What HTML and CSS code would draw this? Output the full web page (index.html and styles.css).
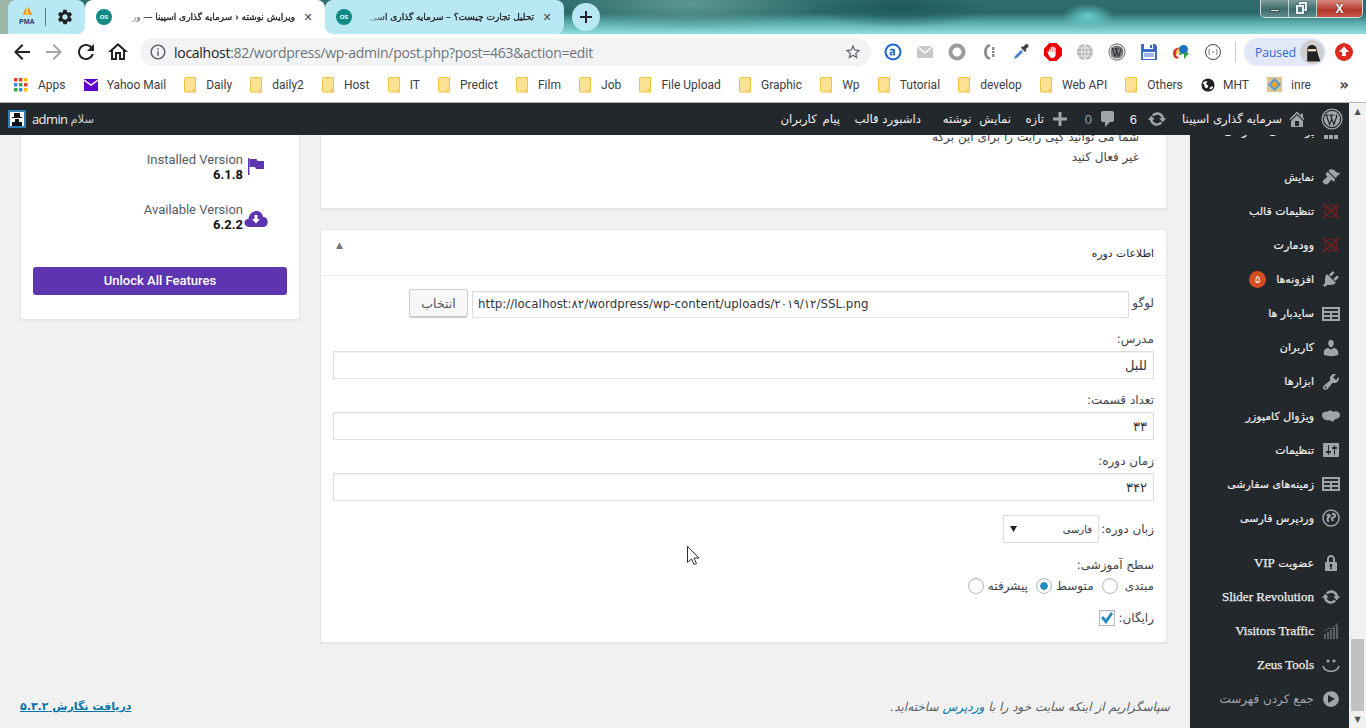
FILE: index.html
```html
<!DOCTYPE html>
<html lang="fa">
<head>
<meta charset="utf-8">
<title>ویرایش نوشته</title>
<link rel="stylesheet" href="styles.css">
</head>
<body>
<svg class="defs" width="0" height="0" aria-hidden="true">
  <symbol id="folder" viewBox="0 0 12 16"><path d="M.5 1.5C.5 1 1 .5 1.5.5h7l3 0v11l0 3.500h-10c-.5 0-1-.5-1-1z" fill="#fde293" stroke="#eec342"/><path d="M9 12.500h2.500v2.500H9z" fill="#fde293" stroke="#eec342" stroke-width=".8"/></symbol>
  <symbol id="xmark" viewBox="0 0 20 20"><g fill="none" stroke="#6a2227" stroke-width="2.200"><path d="M2 3l16 14M18 3L2 17"/><circle cx="10" cy="10" r="6" stroke-width="1.200"/></g></symbol>
  <symbol id="table" viewBox="0 0 20 20"><path fill="#a0a5aa" d="M19 17V3H1v14h18zM17 7H3V5h14v2zm-8 4H3V9h6v2zm8 0h-6V9h6v2zm-8 4H3v-2h6v2zm8 0h-6v-2h6v2z"/></symbol>
  <symbol id="update" viewBox="0 0 20 20"><path fill="currentColor" d="M10.200 3.280c3.530 0 6.430 2.610 6.920 6h2.080l-3.500 4-3.500-4h2.320c-.45-1.970-2.210-3.450-4.320-3.450-1.450 0-2.730.71-3.540 1.780L4.950 5.660C6.230 4.200 8.110 3.280 10.200 3.280zm-.4 13.440c-3.520 0-6.430-2.610-6.920-6H.8l3.500-4c1.170 1.330 2.330 2.670 3.500 4H5.480c.45 1.970 2.210 3.450 4.320 3.450 1.450 0 2.730-.71 3.540-1.780l1.710 1.950c-1.280 1.460-3.150 2.380-5.250 2.380z"/></symbol>
  <symbol id="wplogo" viewBox="0 0 20 20"><circle cx="10" cy="10" r="9" fill="none" stroke="currentColor" stroke-width="1.200"/><circle cx="10" cy="10" r="7.300" fill="currentColor"/><path d="M4.800 6.500l3 8.500 2-5.500-1-3M8.500 6.500l3.200 8.500 2.500-7c.4-1-.2-1.500-.6-1.800M4 6.500h3M8 6.500h3.500" fill="none" stroke="#23282d" stroke-width="1.100"/></symbol>
</svg>

<div class="chrome">
  <div class="tabstrip">
    <div class="pinned">
      <div class="pin pin-first">
        <svg class="pma" viewBox="0 0 24 22"><path d="M6 12L11 1l1 11zM12 12l2-11 5 11z" fill="#f29111"/><path d="M9 12l3-9 3 9z" fill="#f8c66b"/></svg>
        <span class="pma-text">PMA</span>
      </div>
      <div class="pin">
        <svg class="ico18" viewBox="0 0 24 24"><path fill="#202124" d="M19.140 12.940c.04-.3.06-.61.06-.94 0-.32-.02-.64-.07-.94l2.030-1.580c.18-.14.23-.41.12-.61l-1.920-3.320c-.12-.22-.37-.29-.59-.22l-2.390.96c-.5-.38-1.030-.7-1.620-.94l-.36-2.540c-.04-.24-.24-.41-.48-.41h-3.840c-.24 0-.43.17-.47.41l-.36 2.540c-.59.24-1.130.57-1.620.94l-2.390-.96c-.22-.08-.47 0-.59.22L2.740 8.870c-.12.21-.08.47.12.61l2.030 1.580c-.05.3-.09.63-.09.94s.02.64.07.94l-2.030 1.580c-.18.14-.23.41-.12.61l1.920 3.320c.12.22.37.29.59.22l2.390-.96c.5.38 1.030.7 1.620.94l.36 2.540c.05.24.24.41.48.41h3.840c.24 0 .44-.17.47-.41l.36-2.540c.59-.24 1.130-.56 1.620-.94l2.390.96c.22.08.47 0 .59-.22l1.920-3.320c.12-.22.07-.47-.12-.61l-2.010-1.580zM12 15.600c-1.980 0-3.600-1.620-3.600-3.600s1.620-3.600 3.600-3.600 3.600 1.620 3.600 3.600-1.620 3.600-3.600 3.600z"/></svg>
      </div>
    </div>
    <div class="tab tab-active">
      <span class="fav">OS</span>
      <span class="tab-title">ویرایش نوشته ‹ سرمایه گذاری اسپینا — ور</span>
      <span class="tab-x">✕</span>
    </div>
    <div class="tab tab-other">
      <span class="fav">OS</span>
      <span class="tab-title">تحلیل تجارت چیست؟ – سرمایه گذاری اسی</span>
      <span class="tab-x">✕</span>
    </div>
    <div class="newtab">
      <svg class="ico14" viewBox="0 0 14 14"><path d="M6 1h2v5h5v2H8v5H6V8H1V6h5z" fill="#202124"/></svg>
    </div>
    <div class="winctl">
      <span class="wbtn wmin"><i class="wmin-bar"></i></span>
      <span class="wbtn wres"><i class="wres-a"></i><i class="wres-b"></i></span>
      <span class="wbtn wclose">X</span>
    </div>
  </div>

  <div class="toolbar">
    <span class="tbtn"><svg class="ico20" viewBox="0 0 24 24"><path fill="#202124" d="M20 11H7.830l5.590-5.590L12 4l-8 8 8 8 1.410-1.410L7.830 13H20v-2z"/></svg></span>
    <span class="tbtn"><svg class="ico20" viewBox="0 0 24 24"><path fill="#a6a6a6" d="M4 11h12.170l-5.590-5.590L12 4l8 8-8 8-1.410-1.410L16.170 13H4v-2z"/></svg></span>
    <span class="tbtn"><svg class="ico20" viewBox="0 0 24 24"><path fill="#202124" d="M17.650 6.350C16.200 4.900 14.210 4 12 4c-4.420 0-7.990 3.580-7.990 8s3.570 8 7.990 8c3.730 0 6.840-2.550 7.730-6h-2.080c-.82 2.330-3.040 4-5.650 4-3.310 0-6-2.690-6-6s2.690-6 6-6c1.660 0 3.140.69 4.220 1.780L13 11h7V4l-2.350 2.350z"/></svg></span>
    <span class="tbtn"><svg class="ico20" viewBox="0 0 24 24"><path fill="#202124" d="M12 5.690l5 4.500V18h-2v-6H9v6H7v-7.810l5-4.500M12 3L2 12h3v8h6v-6h2v6h6v-8h3L12 3z"/></svg></span>
    <div class="omnibox">
      <svg class="ico16" viewBox="0 0 24 24"><path fill="#5f6368" d="M11 7h2v2h-2zm0 4h2v6h-2zm1-9C6.480 2 2 6.480 2 12s4.480 10 10 10 10-4.480 10-10S17.520 2 12 2zm0 18c-4.410 0-8-3.590-8-8s3.590-8 8-8 8 3.590 8 8-3.590 8-8 8z"/></svg>
      <span class="url"><b class="url-host">localhost</b>:82/wordpress/wp-admin/post.php?post=463&amp;action=edit</span>
      <svg class="ico18 star" viewBox="0 0 24 24"><path fill="#5f6368" d="M22 9.240l-7.190-.62L12 2 9.190 8.630 2 9.240l5.460 4.730L5.820 21 12 17.270 18.180 21l-1.630-7.030L22 9.240zM12 15.400l-3.760 2.270 1-4.280-3.320-2.880 4.380-.38L12 6.100l1.710 4.040 4.380.38-3.320 2.880 1 4.280L12 15.400z"/></svg>
    </div>
    <div class="exts">
      <span class="ext"><svg class="ico18" viewBox="0 0 18 18"><circle cx="9" cy="9" r="8.500" fill="#1a66d6"/><circle cx="9" cy="9" r="6.500" fill="#fff"/><path d="M6 6.500c1-1 5-1.500 5 1V12.500h-1.500v-.7c-1.500 1.200-4 1-4-1 0-1.800 2-2.200 4-2.200 0-1.500-2-1.200-3-.7zm3.500 3.300c-1 0-2.300.2-2.300 1 0 .9 1.500.8 2.300 0z" fill="#1a66d6"/></svg></span>
      <span class="ext"><svg class="ico18" viewBox="0 0 18 18"><path d="M1 3h16v12H1z" fill="#c8c8c8"/><path d="M1 3l8 7 8-7" fill="none" stroke="#fff" stroke-width="1.500"/></svg></span>
      <span class="ext"><svg class="ico18" viewBox="0 0 18 18"><circle cx="9" cy="9" r="6.500" fill="none" stroke="#9b9b9b" stroke-width="4"/></svg></span>
      <span class="ext"><svg class="ico18" viewBox="0 0 18 18"><path d="M10 2.500C4 2.500 4 15.500 10 15.500" fill="none" stroke="#8e8e8e" stroke-width="3"/><path d="M12 4h2.500v3H12zM12 8h2.500v2H12zM12 11h2.500v3H12z" fill="#8e8e8e"/></svg></span>
      <span class="ext"><svg class="ico18" viewBox="0 0 18 18"><path d="M2 16l1-3 6-6 2 2-6 6z" fill="#4a7fd4"/><path d="M9 5l4 4 1.500-1.500-1-1 3-3c.5-1.500-1-3-2.500-2.500l-3 3-1-1z" fill="#3b3f46"/></svg></span>
      <span class="ext"><svg class="ico18" viewBox="0 0 18 18"><path d="M5.500 0h7L18 5.500v7L12.500 18h-7L0 12.500v-7z" fill="#e00"/><path d="M5 10V6.500c0-1 1.300-1 1.300 0V9h.4V4.500c0-1 1.400-1 1.400 0V9h.4V4c0-1 1.400-1 1.400 0v5h.4V5c0-1 1.300-1 1.300 0v6.500c0 2-1.300 3.500-3.300 3.500-2 0-2.700-1-3.700-3L3.600 9.500c-.5-1 .7-1.600 1.200-.8z" fill="#fff"/></svg></span>
      <span class="ext"><svg class="ico18" viewBox="0 0 18 18"><circle cx="9" cy="9" r="8" fill="#b5b5b5"/><path d="M1 9h16M9 1v16M2.500 5h13M2.500 13h13M9 1C4.500 5 4.500 13 9 17M9 1c4.500 4 4.500 12 0 16" fill="none" stroke="#fff" stroke-width=".7"/></svg></span>
      <span class="ext ext-wp"><svg class="ico18" viewBox="0 0 20 20"><use href="#wplogo"/></svg></span>
      <span class="ext"><svg class="ico18" viewBox="0 0 18 18"><path d="M1 1h14l2 2v14H1z" fill="#3b6cc4"/><path d="M4 1h9v5H4z" fill="#fff"/><path d="M10 2h2v3h-2z" fill="#3b6cc4"/><path d="M3 9h12v7H3z" fill="#fff"/><path d="M4 11h10M4 13h10" stroke="#3b6cc4"/></svg></span>
      <span class="ext"><svg class="ico18" viewBox="0 0 18 18"><path d="M1 10c0-4 4-6 7-5-3 1-4 3-4 6 0 1 1 3 3 3l-2 2c-3-1-4-3-4-6z" fill="#d5392b"/><path d="M4 11c0-3 2-5 5-5-2 1-3 3-2.500 5z" fill="#ecc41f"/><path d="M7 12c0-3 2-5 4-5-1 1-2 3-1.500 5z" fill="#3da33a"/><circle cx="11.500" cy="6.500" r="4.500" fill="#1f6fc2"/><path d="M12 10h5l-5 6z" fill="#2e9d36"/></svg></span>
      <span class="ext"><svg class="ico18" viewBox="0 0 18 18"><circle cx="9" cy="9" r="7.500" fill="#fff" stroke="#444"/><path d="M6 6c-1 0-.5 2.500-1.500 3 1 .5.5 3 1.500 3M12 6c1 0 .5 2.500 1.500 3-1 .5-.5 3-1.500 3M8 9h2" fill="none" stroke="#444" stroke-width=".8"/></svg></span>
    </div>
    <span class="divider"></span>
    <div class="pill">
      <span class="pill-text">Paused</span>
      <span class="ninja"><svg viewBox="0 0 20 20"><circle cx="10" cy="10" r="10" fill="#cfcfcf"/><path d="M6 18V8c0-5 8-5 8 0l1 4 2 6z" fill="#222"/><path d="M6.500 7.500l7 0v2h-7z" fill="#e8d7c3"/></svg></span>
    </div>
    <span class="ext"><svg class="ico18" viewBox="0 0 18 18"><circle cx="9" cy="9" r="9" fill="#dd2c1e"/><path d="M9 3.500l5 5.500h-3v4H7V9H4z" fill="#fff"/></svg></span>
  </div>

  <div class="bookmarks">
    <span class="bm"><svg class="bm-apps" viewBox="0 0 14 14"><g><path fill="#ea4335" d="M0 0h3.500v3.500H0z"/><path fill="#ea4335" d="M5 0h3.500v3.500H5z"/><path fill="#fbbc05" d="M10 0h3.500v3.500H10z"/><path fill="#4285f4" d="M0 5h3.500v3.500H0z"/><path fill="#34a853" d="M5 5h3.500v3.500H5z"/><path fill="#ea4335" d="M10 5h3.500v3.500H10z"/><path fill="#34a853" d="M0 10h3.500v3.500H0z"/><path fill="#4285f4" d="M5 10h3.500v3.500H5z"/><path fill="#fbbc05" d="M10 10h3.500v3.500H10z"/></g></svg>Apps</span>
    <span class="bm"><svg class="bm-yahoo" viewBox="0 0 14 12"><path d="M0 0h14v12H0z" fill="#6001d2"/><path d="M0 1l7 5 7-5" fill="none" stroke="#fff" stroke-width="1.500"/></svg>Yahoo Mail</span>
    <span class="bm"><svg class="bm-folder"><use href="#folder"/></svg>Daily</span>
    <span class="bm"><svg class="bm-folder"><use href="#folder"/></svg>daily2</span>
    <span class="bm"><svg class="bm-folder"><use href="#folder"/></svg>Host</span>
    <span class="bm"><svg class="bm-folder"><use href="#folder"/></svg>IT</span>
    <span class="bm"><svg class="bm-folder"><use href="#folder"/></svg>Predict</span>
    <span class="bm"><svg class="bm-folder"><use href="#folder"/></svg>Film</span>
    <span class="bm"><svg class="bm-folder"><use href="#folder"/></svg>Job</span>
    <span class="bm"><svg class="bm-folder"><use href="#folder"/></svg>File Upload</span>
    <span class="bm"><svg class="bm-folder"><use href="#folder"/></svg>Graphic</span>
    <span class="bm"><svg class="bm-folder"><use href="#folder"/></svg>Wp</span>
    <span class="bm"><svg class="bm-folder"><use href="#folder"/></svg>Tutorial</span>
    <span class="bm"><svg class="bm-folder"><use href="#folder"/></svg>develop</span>
    <span class="bm"><svg class="bm-folder"><use href="#folder"/></svg>Web API</span>
    <span class="bm"><svg class="bm-folder"><use href="#folder"/></svg>Others</span>
    <span class="bm"><svg class="bm-globe" viewBox="0 0 16 16"><circle cx="8" cy="8" r="7.500" fill="#202124"/><path d="M2 5c2-1 4-2 5-1s-2 2-1 3 3 1 2 3-2 2-3 1-1-3-3-6zM10 11c1-1 3-2 4-1-1 2-2 3-4 3z" fill="#fff"/></svg>MHT</span>
    <span class="bm"><svg class="bm-inre" viewBox="0 0 16 16"><path d="M0 0h16v16H0z" fill="#dcc58d"/><path d="M8 1l7 7-7 7-7-7z" fill="#4e9bd8"/><path d="M8 4l4 4-4 4-4-4z" fill="#f3a22c"/></svg>inre</span>
    <span class="bm-more">»</span>
  </div>
</div>

<div class="viewport">
  <div class="wp">
    <div class="adminbar">
      <div class="ab-right">
        <svg class="ab-ico ab-logo"><use href="#wplogo"/></svg>
        <svg class="ab-ico ab-home" viewBox="0 0 20 20"><path fill="#a0a5aa" d="M16 8.500l1.530 1.530-1.060 1.060L10 4.620l-6.470 6.470-1.060-1.060L10 2.500l4 4v-2h2v4zm-6-2.460l6 5.990V18H4v-5.970zM12 17v-5H8v5h4z"/></svg>
        <span class="ab-text ab-site">سرمایه گذاری اسپینا</span>
        <svg class="ab-ico ab-upd"><use href="#update"/></svg>
        <span class="ab-num ab-six">6</span>
        <svg class="ab-ico ab-com" viewBox="0 0 20 20"><path fill="#a0a5aa" d="M5 2h9c1.100 0 2 .9 2 2v7c0 1.100-.9 2-2 2h-2l-5 5v-5H5c-1.100 0-2-.9-2-2V4c0-1.100.9-2 2-2z"/></svg>
        <span class="ab-num ab-zero">0</span>
        <svg class="ab-ico ab-plus" viewBox="0 0 20 20"><path fill="#a0a5aa" d="M17 8.500v3h-5.500V17h-3v-5.500H3v-3h5.500V3h3v5.500z"/></svg>
        <span class="ab-text ab-new">تازه</span>
        <span class="ab-text ab-view">نمایش نوشته</span>
        <span class="ab-text ab-dash">داشبورد قالب</span>
        <span class="ab-text ab-msg">پیام کاربران</span>
      </div>
      <div class="ab-user">
        <span class="ab-hi">سلام</span>
        <span class="ab-name">admin</span>
        <svg class="ab-avatar" viewBox="0 0 18 18"><path d="M0 0h18v18H0z" fill="#2d7fb8"/><path d="M2 2h14v14H2z" fill="#fff"/><path d="M6 3h6v4H6zM4 7h10v1H4zM7 9h4v3H7zM4 12h10v4H4z" fill="#111"/></svg>
      </div>
    </div>
    <div class="wp-body">
      <div class="content">
        <div class="columns">
          <aside class="side-box">
            <div class="ver-row">
              <div class="ver-text"><span class="ver-label">Installed Version</span><b class="ver-num">6.1.8</b></div>
              <span class="ver-ico"><svg class="ico-flag" viewBox="0 0 16 18"><path d="M0 0h1.500v17H0z" fill="#5e35b1"/><path d="M1.500 1h7l1 2H16v8H8l-1-2H1.500z" fill="#5e35b1"/></svg></span>
            </div>
            <div class="ver-row">
              <div class="ver-text"><span class="ver-label">Available Version</span><b class="ver-num">6.2.2</b></div>
              <span class="ver-ico"><svg class="ico-cloud" viewBox="0 0 24 16"><path d="M5 16C-1 16-1 8 4.500 8 5 3 9 0 12.500 0c3.500 0 6 2.500 6.500 6 6-.5 6.500 10 0 10z" fill="#5e35b1"/><path d="M10.500 4h3v4h2.500L12 12.500 8 8h2.500z" fill="#fff"/></svg></span>
            </div>
            <button class="unlock" type="button">Unlock All Features</button>
          </aside>
          <main class="main-col">
            <section class="box box-top">
              <p class="box-line">شما می توانید کپی رایت را برای این برگه</p>
              <p class="box-line">غیر فعال کنید</p>
            </section>
            <section class="box box-form">
              <header class="box-head">
                <h2 class="box-title">اطلاعات دوره</h2>
                <span class="box-toggle">▲</span>
              </header>
              <form class="box-body">
                <div class="logo-row">
                  <label class="logo-label">لوگو</label>
                  <input class="logo-input" type="text" dir="ltr" value="http://localhost:۸۲/wordpress/wp-content/uploads/۲۰۱۹/۱۲/SSL.png">
                  <button class="pick" type="button">انتخاب</button>
                </div>
                <div class="field">
                  <label class="f-label">مدرس:</label>
                  <input class="f-input" type="text" value="للبل">
                </div>
                <div class="field">
                  <label class="f-label">تعداد قسمت:</label>
                  <input class="f-input" type="text" value="۳۳">
                </div>
                <div class="field">
                  <label class="f-label">زمان دوره:</label>
                  <input class="f-input" type="text" value="۳۴۲">
                </div>
                <div class="lang-row">
                  <label class="lang-label">زبان دوره:</label>
                  <select class="lang-select"><option>فارسی</option></select>
                </div>
                <div class="level-label">سطح آموزشی:</div>
                <div class="level-row">
                  <label class="opt">مبتدی<input class="radio" type="radio" name="lvl"></label>
                  <label class="opt">متوسط<input class="radio" type="radio" name="lvl" checked></label>
                  <label class="opt">پیشرفته<input class="radio" type="radio" name="lvl"></label>
                </div>
                <div class="free-row">
                  <label class="free-label">رایگان:</label>
                  <input class="check" type="checkbox" checked>
                </div>
              </form>
            </section>
          </main>
        </div>
        <footer class="foot">
          <span class="foot-thanks">سپاسگزاریم از اینکه سایت خود را با <a class="foot-wp">وردپرس</a> ساخته‌اید.</span>
          <a class="foot-ver">دریافت نگارش ۵.۳.۲</a>
        </footer>
      </div>
      <nav class="menu">
        <div class="mi mi-clip"><svg class="mi-ico" viewBox="0 0 20 20"><path fill="#a0a5aa" d="M3 10h4v8H3zM8 3h4v15H8zM13 8h4v10h-4z"/></svg><span class="mi-t">پوسته‌های سفارشی</span></div>
        <div class="mi mi-after-clip"><svg class="mi-ico" viewBox="0 0 20 20"><path fill="#a0a5aa" d="M14.480 11.060L7.410 3.990l1.500-1.500c.5-.56 2.300-.47 3.510.32 1.210.8 1.430 1.280 2.910 2.100 1.180.64 2.450 1.260 4.450.85zm-.71.71L6.700 4.700 4.930 6.470c-.39.39-.39 1.020 0 1.410l1.060 1.060c.39.39.39 1.030 0 1.420-.6.6-1.430 1.110-2.210 1.690-.35.26-.7.53-1.010.84C1.430 13.230 1.400 15.030 2.770 16.400c1.370 1.370 3.170 1.340 4.510.01.31-.31.58-.66.84-1.010.58-.78 1.090-1.610 1.690-2.210.39-.39 1.030-.39 1.420 0l1.060 1.060c.39.39 1.020.39 1.410 0z"/></svg><span class="mi-t">نمایش</span></div>
        <div class="mi"><svg class="mi-ico"><use href="#xmark"/></svg><span class="mi-t">تنظیمات قالب</span></div>
        <div class="mi"><svg class="mi-ico"><use href="#xmark"/></svg><span class="mi-t">وودمارت</span></div>
        <div class="mi"><svg class="mi-ico" viewBox="0 0 20 20"><path fill="#a0a5aa" d="M13.110 4.360L9.870 7.600 8 5.730l3.240-3.240c.35-.34 1.050-.2 1.560.32.52.51.66 1.210.31 1.550zm-8 1.770l.91-1.120 9.010 9.010-1.190.84c-.71.71-2.630 1.160-3.820 1.160H6.140L4.900 17.260c-.59.59-1.540.59-2.120 0-.59-.58-.59-1.530 0-2.120l1.240-1.240v-3.880c0-1.130.4-3.190 1.090-3.890zm7.260 3.970l3.240-3.240c.34-.35 1.040-.21 1.550.31.52.51.66 1.210.31 1.550l-3.240 3.250z"/></svg><span class="mi-t">افزونه‌ها</span><span class="badge">۵</span></div>
        <div class="mi"><svg class="mi-ico"><use href="#table"/></svg><span class="mi-t">سایدبار ها</span></div>
        <div class="mi"><svg class="mi-ico" viewBox="0 0 20 20"><path fill="#a0a5aa" d="M10 9.250c-2.270 0-2.730-3.440-2.730-3.440C7 4.020 7.820 2 9.970 2c2.160 0 2.980 2.020 2.710 3.810 0 0-.41 3.440-2.680 3.440zm0 2.570L12.720 10c2.390 0 4.520 2.330 4.520 4.530v2.490s-3.650 1.130-7.240 1.130c-3.650 0-7.240-1.130-7.240-1.130v-2.490c0-2.250 1.940-4.480 4.470-4.480z"/></svg><span class="mi-t">کاربران</span></div>
        <div class="mi"><svg class="mi-ico" viewBox="0 0 20 20"><path fill="#a0a5aa" d="M16.680 9.770c-1.340 1.340-3.300 1.670-4.950.99l-5.410 6.520c-.99.99-2.590.99-3.580 0s-.99-2.590 0-3.570l6.520-5.420c-.68-1.650-.35-3.610.99-4.950 1.280-1.280 3.120-1.620 4.720-1.060l-2.890 2.890 2.820 2.820 2.860-2.870c.53 1.580.18 3.390-1.080 4.650zM3.810 16.210c.4.39 1.040.39 1.430 0 .4-.4.4-1.040 0-1.430-.39-.4-1.030-.4-1.430 0-.39.39-.39 1.030 0 1.430z"/></svg><span class="mi-t">ابزارها</span></div>
        <div class="mi"><svg class="mi-ico" viewBox="0 0 20 20"><path fill="#a0a5aa" d="M1 9c0-3 3-4 5-3 2-2 5-2 6 0 3-2 7 0 7 3s-3 4-5 4c-1 3-4 3-5 1-4 1-8-1-8-5z"/></svg><span class="mi-t">ویژوال کامپوزر</span></div>
        <div class="mi"><svg class="mi-ico" viewBox="0 0 20 20"><path fill="#a0a5aa" d="M18 16V4c0-.55-.45-1-1-1H3c-.55 0-1 .45-1 1v12c0 .55.45 1 1 1h14c.55 0 1-.45 1-1zM8 11h1c.55 0 1 .45 1 1s-.45 1-1 1H8v1.500c0 .28-.22.5-.5.5s-.5-.22-.5-.5V13H6c-.55 0-1-.45-1-1s.45-1 1-1h1V5.500c0-.28.22-.5.5-.5s.5.22.5.5V11zm5-2h-1c-.55 0-1-.45-1-1s.45-1 1-1h1V5.500c0-.28.22-.5.5-.5s.5.22.5.5V7h1c.55 0 1 .45 1 1s-.45 1-1 1h-1v5.500c0 .28-.22.5-.5.5s-.5-.22-.5-.5V9z"/></svg><span class="mi-t">تنظیمات</span></div>
        <div class="mi"><svg class="mi-ico"><use href="#table"/></svg><span class="mi-t">زمینه‌های سفارشی</span></div>
        <div class="mi"><svg class="mi-ico" viewBox="0 0 20 20"><circle cx="10" cy="10" r="8" fill="none" stroke="#a0a5aa" stroke-width="1.500"/><path d="M6 8c2-3 4 0 2 1s-2 4 0 4M11 6c3-1 4 2 2 3s-3 1-1 4" fill="none" stroke="#a0a5aa" stroke-width="2"/></svg><span class="mi-t">وردپرس فارسی</span></div>
        <div class="mi mi-sep"><svg class="mi-ico" viewBox="0 0 20 20"><path fill="#a0a5aa" d="M14 9h1c.55 0 1 .45 1 1v7c0 .55-.45 1-1 1H5c-.55 0-1-.45-1-1v-7c0-.55.45-1 1-1h1V6c0-2.210 1.790-4 4-4s4 1.790 4 4v3zm-2 0V6c0-1.100-.9-2-2-2s-2 .9-2 2v3h4zm-1 7l-.36-2.150c.51-.24.86-.75.86-1.350 0-.83-.67-1.500-1.500-1.500s-1.500.67-1.500 1.500c0 .6.35 1.110.86 1.350L9 16h2z"/></svg><span class="mi-t">عضویت <span class="mi-latin">VIP</span></span></div>
        <div class="mi"><svg class="mi-ico mi-upd"><use href="#update"/></svg><span class="mi-t mi-latin">Slider Revolution</span></div>
        <div class="mi"><svg class="mi-ico" viewBox="0 0 20 20"><path fill="#5a6066" d="M3 13h2v5H3zM6 11h2v7H6zM9 9h2v9H9zM12 7h2v11h-2zM15 4h2v14h-2z"/><path d="M3 10l5-3 3 1 6-6" fill="none" stroke="#5a6066"/></svg><span class="mi-t mi-latin">Visitors Traffic</span></div>
        <div class="mi"><svg class="mi-ico" viewBox="0 0 20 20"><circle cx="7" cy="6" r="1.600" fill="#a0a5aa"/><circle cx="13" cy="6" r="1.600" fill="#a0a5aa"/><path d="M2 11c2 7 14 7 16 0" fill="none" stroke="#a0a5aa" stroke-width="1.600"/></svg><span class="mi-t mi-latin">Zeus Tools</span></div>
        <div class="mi mi-collapse"><svg class="mi-ico" viewBox="0 0 20 20"><path fill="#a0a5aa" d="M10 2.160c4.330 0 7.840 3.510 7.840 7.840s-3.510 7.840-7.840 7.840S2.160 14.330 2.160 10 5.710 2.160 10 2.160zM7 14l7-4-7-4v8z"/></svg><span class="mi-t mi-t-dim">جمع کردن فهرست</span></div>
      </nav>
    </div>
  </div>
  <div class="scrollbar">
    <span class="sb-arrow">▲</span>
    <span class="sb-track"><i class="sb-thumb"></i></span>
    <span class="sb-arrow">▼</span>
  </div>
</div>

<svg class="cursor" viewBox="0 0 13 20"><path d="M.5.5v16l4-3.500 2.500 5.500 2.500-1-2.500-5.500h5z" fill="#fff" stroke="#2a2a3a"/></svg>
</body>
</html>
```
FILE: styles.css
```css
* { box-sizing: border-box; }
html, body { margin: 0; padding: 0; }
body {
  width: 1366px;
  height: 728px;
  overflow: hidden;
  position: relative;
  font-family: "DejaVu Sans", "Noto Sans", sans-serif;
  background: #f1f1f1;
  display: flex;
  flex-direction: column;
}
.defs { position: absolute; }
.ico14 { width: 14px; height: 14px; display: block; }
.ico16 { width: 18px; height: 18px; display: block; flex: none; }
.ico18 { width: 18px; height: 18px; display: block; flex: none; }
.ico20 { width: 24px; height: 24px; display: block; }

/* Browser chrome */
.chrome { flex: none; }
.tabstrip {
  height: 34px;
  display: flex;
  padding-left: 8px;
  background:
    radial-gradient(ellipse 26px 12px at 1088px 16px, #66d0cf 0, rgba(102, 208, 207, 0) 100%),
    radial-gradient(ellipse 130px 26px at 690px 4px, #5d9792 0, rgba(93, 151, 146, 0) 100%),
    radial-gradient(ellipse 90px 20px at 900px 8px, #1f5a5a 0, rgba(31, 90, 90, 0) 100%),
    linear-gradient(90deg, #9db8a7 0, #9db8a7 8px, rgba(157, 184, 167, 0) 40px),
    linear-gradient(180deg, #2f6e6d 0, #2a6a6a 13px, #58a8a9 22px, #8fdfe1 34px);
}
.pinned {
  display: flex;
  width: 77px;
  height: 34px;
  background: #b8e8f3;
  border-radius: 8px 8px 8px 0;
  position: relative;
  z-index: 1;
  padding-top: 8px;
}
.pin { width: 38px; height: 18px; display: flex; align-items: center; justify-content: center; position: relative; }
.pin-first { border-right: 1px solid #5e7a82; }
.pma { width: 22px; height: 16px; display: block; margin-top: -6px; }
.pma-text {
  position: absolute;
  left: 11px;
  top: 10px;
  font: 700 7px "Liberation Sans", sans-serif;
  color: #2b3a6e;
}
.tab {
  height: 34px;
  display: flex;
  align-items: center;
  position: relative;
  padding: 0 8px 0 11px;
}
.tab-active { width: 240px; background: #fff; border-radius: 8px 8px 0 0; }
.tab-active::before, .tab-active::after {
  content: "";
  position: absolute;
  bottom: 0;
  width: 10px;
  height: 10px;
  background: #fff;
}
.tab-active::before { left: -9px; }
.tab-active::after { right: -9px; }
.tab-other { width: 239px; background: #b8e8f3; border-radius: 8px; z-index: 1; }
.fav {
  width: 16px;
  height: 16px;
  border-radius: 50%;
  background: #0e8a85;
  color: #fff;
  font: 700 6px/16px "Liberation Sans", sans-serif;
  text-align: center;
  flex: none;
}
.tab-title {
  flex: 1;
  min-width: 0;
  direction: rtl;
  white-space: nowrap;
  overflow: hidden;
  font-size: 9px;
  line-height: 16px;
  -webkit-text-stroke: .3px #202124;
  color: #202124;
  margin-left: 10px;
  -webkit-mask-image: linear-gradient(90deg, transparent 0, transparent 4px, #000 26px);
  mask-image: linear-gradient(90deg, transparent 0, transparent 4px, #000 26px);
}
.tab-x { width: 18px; margin-left: 4px; text-align: center; font: 11px "DejaVu Sans", sans-serif; color: #45494d; flex: none; }
.newtab {
  width: 28px;
  height: 28px;
  border-radius: 50%;
  background: #b8e8f3;
  margin: 3px 0 0 8px;
  display: flex;
  align-items: center;
  justify-content: center;
}
.winctl {
  margin: 0 3px 0 auto;
  width: 103px;
  height: 18px;
  display: flex;
  border: 1px solid rgba(235, 245, 245, .85);
  border-top: 0;
  border-radius: 0 0 5px 5px;
  overflow: hidden;
}
.wbtn {
  height: 17px;
  width: 28px;
  display: flex;
  align-items: center;
  justify-content: center;
  position: relative;
  background: linear-gradient(180deg, #7c9c9b 0, #3f6d6d 55%, #5f8c8c 100%);
  border-right: 1px solid rgba(235, 245, 245, .7);
}
.wmin-bar { width: 10px; height: 3px; background: #eef3f3; border: 1px solid #39494a; margin-top: 4px; display: block; }
.wres-a, .wres-b { width: 8px; height: 9px; border: 2px solid #e7eeee; display: block; box-shadow: 0 0 1px #223; }
.wres-a { position: absolute; left: 10px; top: 2px; }
.wres-b { position: absolute; left: 7px; top: 5px; background: #4e7a7a; }
.wclose {
  flex: 1;
  border-right: 0;
  background: linear-gradient(180deg, #d98a80 0, #b4382a 60%, #c8564a 100%);
  color: #fff;
  font: 700 12px "Liberation Sans", sans-serif;
  text-shadow: 0 0 2px #333;
}
.toolbar {
  height: 34px;
  padding: 4px 0 0 6px;
  background: #fff;
  display: flex;
  align-items: flex-start;
}
.tbtn { width: 32px; height: 28px; display: flex; align-items: center; justify-content: center; flex: none; }
.omnibox {
  width: 731px;
  height: 28px;
  margin-left: 6px;
  flex: none;
  background: #f1f3f4;
  border-radius: 14px;
  display: flex;
  align-items: center;
  padding: 0 9px;
}
.url {
  flex: 1;
  margin-left: 7px;
  font: 14px "Open Sans", "Noto Sans", sans-serif;
  letter-spacing: -.28px;
  color: #70757a;
  white-space: nowrap;
}
.url-host { font-weight: 400; color: #202124; }
.star { margin-left: auto; }
.exts { display: flex; margin-left: 6px; }
.ext { width: 32px; height: 28px; display: flex; align-items: center; justify-content: center; flex: none; }
.ext-wp { color: #7a7a7a; }
.divider { width: 1px; height: 20px; margin: 4px 8px 0 6px; background: #c6c8ca; flex: none; }
.pill {
  width: 82px;
  height: 28px;
  flex: none;
  border-radius: 14px;
  background: #e1e9f8;
  display: flex;
  align-items: center;
  padding: 0 2px 0 11px;
  margin-right: 2px;
}
.pill-text { font: 12px "Open Sans", "Noto Sans", sans-serif; color: #3367d6; flex: 1; }
.ninja { width: 24px; height: 24px; display: block; }
.ninja svg { width: 24px; height: 24px; display: block; }
.bookmarks {
  height: 35px;
  padding: 0 0 1px 14px;
  background: #fff;
  border-bottom: 1px solid #b4b4b4;
  display: flex;
  align-items: center;
  gap: 18.150px;
  position: relative;
}
.bm {
  display: flex;
  align-items: center;
  font: 12px Roboto, "Noto Sans", sans-serif;
  color: #3c4043;
  white-space: nowrap;
  flex: none;
}
.bm-apps { width: 14px; height: 14px; margin-right: 10px; }
.bm-yahoo { width: 14px; height: 12px; margin-right: 9px; }
.bm-folder { width: 12px; height: 16px; margin-right: 10px; }
.bm-globe { width: 14px; height: 14px; margin-right: 8px; }
.bm-inre { width: 15px; height: 15px; margin-right: 9px; }
.bm-more { margin-left: auto; margin-right: 17px; font: 700 15px "DejaVu Sans", sans-serif; color: #3c4043; }

/* Page */
.viewport { flex: 1; min-height: 0; display: flex; }
.wp { width: 1349px; flex: none; display: flex; flex-direction: column; min-height: 0; }
.adminbar {
  height: 32px;
  flex: none;
  background: #23282d;
  display: flex;
  justify-content: space-between;
  align-items: center;
  direction: rtl;
  color: #eee;
  font-size: 11.700px;
}
.ab-right { display: flex; align-items: center; }
.ab-ico { width: 20px; height: 20px; flex: none; display: block; color: #a0a5aa; }
.ab-logo { width: 22px; height: 22px; margin-right: 6px; }
.ab-home { margin-right: 14px; }
.ab-site { margin-right: 5px; width: 100px; }
.ab-upd { margin-right: 15px; }
.ab-num { font: 13px "Liberation Sans", sans-serif; }
.ab-six { margin-right: 10px; width: 8px; }
.ab-com { margin-right: 11px; }
.ab-zero { margin-right: 6px; width: 8px; color: #9a9ea3; }
.ab-plus { margin-right: 14px; }
.ab-new { margin-right: 6px; width: 19px; }
.ab-view { margin-right: 14px; width: 74px; word-spacing: 4px; }
.ab-dash { margin-right: 16px; width: 67px; }
.ab-msg { margin-right: 14px; width: 60px; word-spacing: 2px; }
.ab-text { white-space: nowrap; }
.ab-user { display: flex; align-items: center; padding-left: 8px; }
.ab-hi { font-size: 11.500px; color: #c9cccf; margin-right: 3px; }
.ab-name { font: 13px "Open Sans", "Noto Sans", sans-serif; letter-spacing: -.6px; margin: 0 3px 0 6px; direction: ltr; }
.ab-avatar { width: 18px; height: 18px; display: block; }
.wp-body { flex: 1; min-height: 0; display: flex; }
.content {
  width: 1190px;
  flex: none;
  display: flex;
  flex-direction: column;
  overflow: hidden;
}
.columns { display: flex; gap: 20px; padding: 0 23px 0 20px; }
.side-box {
  width: 280px;
  flex: none;
  align-self: flex-start;
  background: #fff;
  border: 1px solid #e5e5e5;
  border-top: 0;
  box-shadow: 0 1px 1px rgba(0, 0, 0, .04);
  padding: 17px 12px 24px;
  font-family: Roboto, sans-serif;
  display: flex;
  flex-direction: column;
  gap: 20px;
}
.ver-row { display: flex; justify-content: flex-end; padding-right: 19px; height: 30px; }
.ver-text { text-align: right; display: flex; flex-direction: column; margin-right: 1px; }
.ver-label { font-size: 13px; line-height: 15px; color: #555d66; }
.ver-num { font-size: 13px; line-height: 15px; color: #111; font-weight: 700; }
.ver-ico { width: 24px; display: flex; justify-content: center; align-items: center; }
.ico-flag { width: 16px; height: 18px; display: block; }
.ico-cloud { width: 24px; height: 16px; display: block; margin-top: 3px; }
.unlock {
  height: 28px;
  margin-top: 15px;
  padding: 0 0 2px;
  background: #5e35b1;
  border: 0;
  border-radius: 3px;
  color: #fff;
  font: 500 13px Roboto, sans-serif;
}
.main-col { width: 847px; flex: none; margin-top: -8px; direction: rtl; }
.box {
  background: #fff;
  border: 1px solid #e5e5e5;
  box-shadow: 0 1px 1px rgba(0, 0, 0, .04);
  color: #444;
}
.box-top { padding: 0 27px 41px 0; border-top: 0; }
.box-line { margin: 0; height: 20px; font-size: 12px; line-height: 20px; color: #444; }
.box-form { margin-top: 20px; }
.box-head {
  height: 46px;
  border-bottom: 1px solid #eee;
  display: flex;
  justify-content: space-between;
  padding: 0 12px 0 15px;
}
.box-title { margin: 16px 0 0; font-size: 10.800px; line-height: 16px; font-weight: 400; color: #23282d; }
.box-toggle { font-size: 9px; line-height: 12px; margin-top: 9px; color: #72777c; }
.box-body { padding: 13px 12px 14px; font-size: 12px; color: #444; display: block; margin: 0; }
.logo-row { display: flex; align-items: flex-start; height: 29px; }
.logo-label { width: 25px; flex: none; line-height: 28px; color: #444; }
input[type="text"], select, .pick { font-family: "DejaVu Sans", sans-serif; }
.logo-input {
  width: 657px;
  height: 27px;
  margin-top: 2px;
  padding: 0 5px 1px;
  flex: none;
  border: 1px solid #ddd;
  box-shadow: inset 0 1px 2px rgba(0, 0, 0, .07);
  font-size: 11.850px;
  color: #32373c;
  background: #fff;
  outline: 0;
}
.pick {
  width: 59px;
  height: 28px;
  margin-right: 4px;
  flex: none;
  background: #f7f7f7;
  border: 1px solid #ccc;
  border-radius: 3px;
  box-shadow: 0 1px 0 #ccc;
  color: #555;
  font-size: 12.500px;
  padding: 0;
}
.field { margin-top: 11px; }
.f-label { display: block; height: 22px; line-height: 21px; text-align: right; color: #444; }
.f-input {
  display: block;
  width: 100%;
  height: 28px;
  border: 1px solid #ddd;
  box-shadow: inset 0 1px 2px rgba(0, 0, 0, .07);
  padding: 0 6px;
  font-size: 13px;
  color: #32373c;
  background: #fff;
  outline: 0;
  text-align: right;
}
.lang-row { display: flex; align-items: center; margin-top: 14px; height: 28px; }
.lang-label { width: 55px; flex: none; }
.lang-select {
  appearance: none;
  -webkit-appearance: none;
  width: 96px;
  height: 28px;
  border: 1px solid #ddd;
  border-radius: 0;
  padding: 0 6px 0 20px;
  font-size: 10px;
  color: #32373c;
  background: #fff url("data:image/svg+xml,%3Csvg xmlns='http://www.w3.org/2000/svg' width='7' height='6'%3E%3Cpath d='M0 0h7L3.500 6z' fill='%23222'/%3E%3C/svg%3E") no-repeat 6px 50%;
}
.level-label { margin-top: 12px; height: 20px; line-height: 20px; }
.level-row { display: flex; height: 20px; align-items: center; margin-top: 1px; gap: 8px; }
.opt { display: flex; align-items: center; gap: 4px; line-height: 20px; white-space: nowrap; }
.opt:first-child { gap: 7px; }
.radio {
  appearance: none;
  -webkit-appearance: none;
  width: 16px;
  height: 16px;
  margin: 0;
  border: 1px solid #b4b9be;
  border-radius: 50%;
  box-shadow: inset 0 1px 2px rgba(0, 0, 0, .1);
  background: #fff;
}
.radio:checked { background: radial-gradient(circle, #1e8cbe 0, #1e8cbe 3.500px, #fff 4px); }
.free-row { display: flex; align-items: center; height: 20px; margin-top: 12px; gap: 3px; }
.check {
  appearance: none;
  -webkit-appearance: none;
  width: 16px;
  height: 16px;
  margin: 0;
  border: 1px solid #b4b9be;
  box-shadow: inset 0 1px 2px rgba(0, 0, 0, .1);
  background: #fff url("data:image/svg+xml,%3Csvg xmlns='http://www.w3.org/2000/svg' width='14' height='14'%3E%3Cpath d='M1 7l2-2 3 3 5-7 2 2-7 10z' fill='%231e8cbe'/%3E%3C/svg%3E") no-repeat center;
}
.foot {
  margin-top: auto;
  height: 31px;
  padding: 0 20px;
  display: flex;
  justify-content: space-between;
  align-items: flex-start;
  direction: rtl;
  font-size: 12.100px;
  line-height: 20px;
}
.foot-thanks { font-style: italic; color: #555d66; }
.foot-wp { color: #0073aa; }
.foot-ver { color: #0073aa; text-decoration: underline; font-weight: 700; font-size: 11px; }
.menu {
  width: 159px;
  flex: none;
  background: #23282d;
  direction: rtl;
  overflow: hidden;
  color: #eee;
}
.mi { height: 34.150px; display: flex; align-items: center; padding-right: 8px; gap: 7px; }
.mi-clip { margin-top: -21px; height: 34px; }
.mi-after-clip { margin-top: 12px; }
.mi-sep { margin-top: 10px; }
.mi-ico { width: 20px; height: 20px; flex: none; display: block; color: #a0a5aa; }
.mi-t { white-space: nowrap; font-size: 11px; -webkit-text-stroke: .2px #eee; }
.mi-latin { font-family: "Liberation Serif", serif; font-size: 13px; -webkit-text-stroke: .25px #eee; }
.mi-t-dim { color: #a0a5aa; -webkit-text-stroke: 0; font-size: 12px; }
.badge {
  width: 17px;
  height: 17px;
  border-radius: 50%;
  background: #d54e21;
  color: #fff;
  font-size: 10px;
  line-height: 17px;
  text-align: center;
  margin-right: 3px;
}
.scrollbar {
  width: 17px;
  flex: none;
  background: #f1f1f1;
  display: flex;
  flex-direction: column;
  align-items: center;
}
.sb-arrow { height: 17px; font-size: 8px; line-height: 17px; color: #505050; flex: none; }
.sb-track { flex: 1; width: 100%; position: relative; display: block; }
.sb-thumb { position: absolute; left: 2px; right: 2px; top: 519px; height: 72px; background: #c1c1c1; display: block; }
.cursor { position: absolute; left: 687px; top: 546px; width: 13px; height: 20px; }
```
